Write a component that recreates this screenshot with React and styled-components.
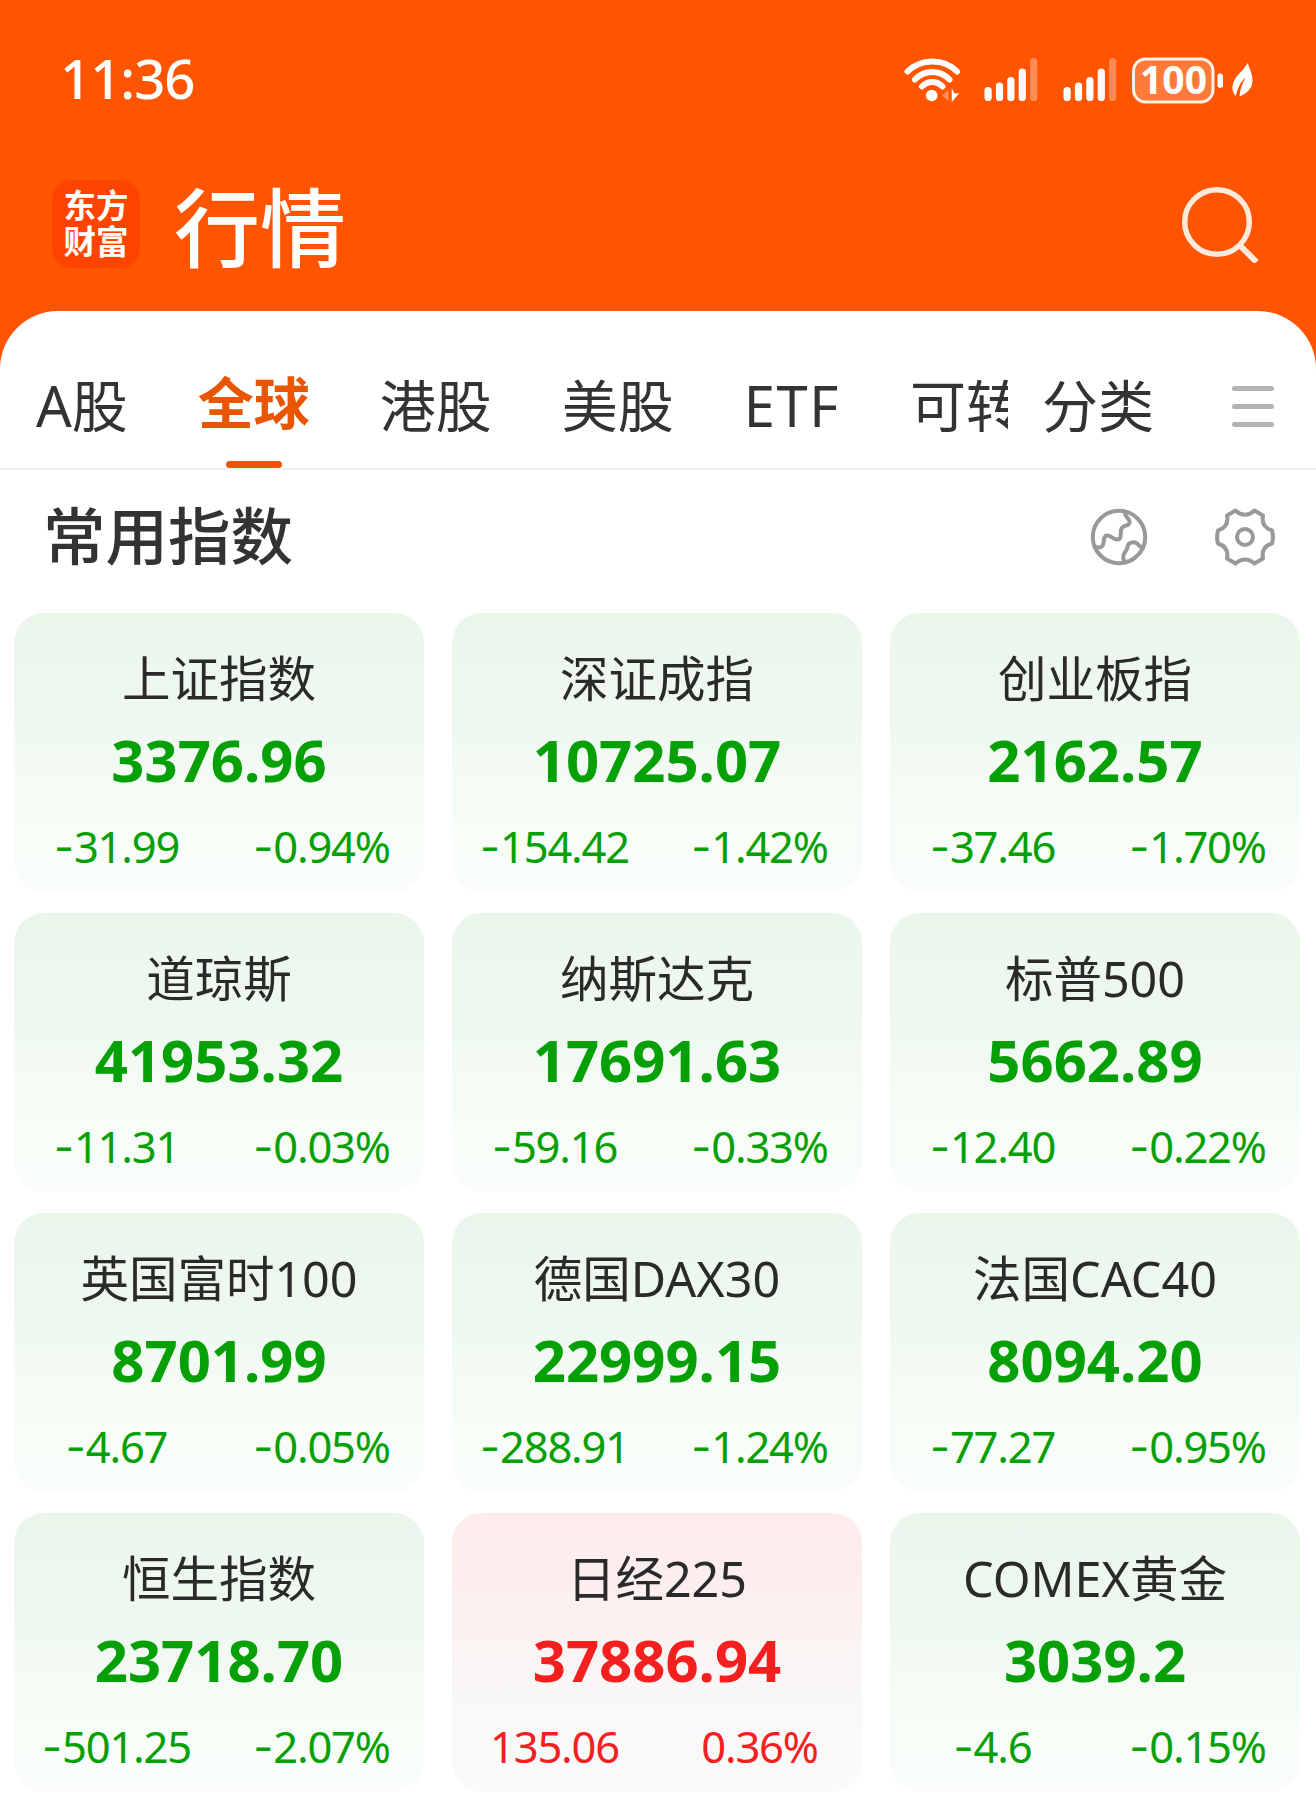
import React from 'react';
import styled, { createGlobalStyle } from 'styled-components';

const Global = createGlobalStyle`
  * { box-sizing: border-box; }
  body { margin: 0; background: #fff; }
`;

const sans = `"Noto Sans", "Noto Sans CJK SC", sans-serif`;

const Screen = styled.div`
  width: 1316px;
  height: 1797px;
  overflow: hidden;
  display: flex;
  flex-direction: column;
  background: #ff5500;
  font-family: ${sans};
`;

const StatusBar = styled.div`
  display: flex;
  align-items: center;
  justify-content: space-between;
  height: 156px;
  padding: 3px 61px 0 60px;
  color: #fff;
`;

const Clock = styled.time`
  font-size: 54.5px;
  font-weight: 500;
  line-height: 74px;
  margin-top: -4px;
  letter-spacing: -1px;
`;

const StatusIcons = styled.svg`
  width: 352px;
  height: 50px;
  display: block;
  overflow: visible;
`;

const BatteryText = styled.text`
  font-family: ${sans};
  font-size: 39px;
  font-weight: 700;
  fill: #fff;
`;

const TitleBar = styled.header`
  display: flex;
  align-items: center;
  height: 155px;
  padding: 0 57px 19px 52px;
`;

const Logo = styled.div`
  width: 88px;
  height: 88px;
  border-radius: 20px;
  background: #ff4400;
  color: #fff;
  display: flex;
  flex-direction: column;
  align-items: center;
  justify-content: center;
  font-size: 32.5px;
  font-weight: 700;
  line-height: 36px;
`;

const PageTitle = styled.h1`
  margin: 0 auto 0 34px;
  color: #fff;
  font-size: 86px;
  font-weight: 500;
  line-height: 100px;
  padding-top: 8px;
`;

const SearchIcon = styled.svg`
  width: 78px;
  height: 78px;
  margin: -1px 0 0 0;
`;

const Sheet = styled.main`
  flex: 1;
  min-height: 0;
  background: #fff;
  border-radius: 58px 58px 0 0;
`;

const TabBar = styled.nav`
  display: flex;
  height: 159px;
  border-bottom: 2px solid #f0f1f2;
  padding: 0 42px 0 36px;
`;

const TabScroller = styled.div`
  display: flex;
  width: 972px;
  overflow: hidden;
  gap: 70px;
`;

const Tab = styled.div`
  flex: none;
  display: flex;
  flex-direction: column;
  align-items: center;
  justify-content: space-between;
  padding-top: ${(p) => (p.$active ? 51 : 54)}px;
  color: ${(p) => (p.$active ? '#ea5504' : '#333')};
  font-size: 56px;
  font-weight: ${(p) => (p.$active ? 700 : 400)};
  line-height: 80px;
  letter-spacing: ${(p) => p.$spacing || 0}px;
  white-space: nowrap;
  margin-left: ${(p) => p.$shift || 0}px;
`;

const Underline = styled.span`
  width: 56px;
  height: 7px;
  border-radius: 4px;
  background: #ea5504;
`;

const MenuButton = styled.div`
  width: 42px;
  margin-left: auto;
  padding-top: 75px;
  display: flex;
  flex-direction: column;
  gap: 13px;
`;

const MenuBar = styled.span`
  height: 5px;
  border-radius: 3px;
  background: #b3b3b3;
`;

const SectionHead = styled.div`
  display: flex;
  align-items: center;
  height: 143px;
  padding: 0 39px 12px 43px;
`;

const SectionTitle = styled.h2`
  margin: 0 auto 0 0;
  color: #333;
  font-size: 62.5px;
  font-weight: 500;
  line-height: 90px;
`;

const LineIcon = styled.svg`
  width: 64px;
  height: 64px;
  margin-left: 62px;
  margin-top: 3px;
  fill: none;
  stroke: #999;
  stroke-width: 4;
  stroke-linejoin: round;
  stroke-linecap: round;
`;

const Grid = styled.section`
  display: grid;
  grid-template-columns: repeat(3, 410px);
  grid-auto-rows: 279px;
  gap: 21px 28px;
  padding-left: 14px;
`;

const Card = styled.article`
  border-radius: 30px;
  padding-top: 30px;
  text-align: center;
  color: ${(p) => (p.$up ? '#f4201f' : '#05a005')};
  background: ${(p) =>
    p.$up
      ? 'linear-gradient(#ffebeb, #fcefef 28%, #f9f7f6 62%, #fafafa)'
      : 'linear-gradient(#ebf6eb, #eef8ef 35%, #f5fcf6 68%, #fafdfa)'};
`;

const Name = styled.div`
  color: #2a2a2a;
  font-size: 48.5px;
  line-height: 70px;
`;

const Price = styled.div`
  margin-top: 7px;
  font-size: 58px;
  font-weight: 700;
  line-height: 80px;
`;

const Changes = styled.div`
  display: grid;
  grid-template-columns: 1fr 1fr;
  margin-top: 16px;
  font-size: 43.5px;
  line-height: 60px;
  letter-spacing: -1.2px;
`;

const Sign = styled.span`
  font-family: Inter, sans-serif;
  letter-spacing: 0;
`;

const INDEXES = [
  ['上证指数', '3376.96', '-31.99', '-0.94%'],
  ['深证成指', '10725.07', '-154.42', '-1.42%'],
  ['创业板指', '2162.57', '-37.46', '-1.70%'],
  ['道琼斯', '41953.32', '-11.31', '-0.03%'],
  ['纳斯达克', '17691.63', '-59.16', '-0.33%'],
  ['标普500', '5662.89', '-12.40', '-0.22%'],
  ['英国富时100', '8701.99', '-4.67', '-0.05%'],
  ['德国DAX30', '22999.15', '-288.91', '-1.24%'],
  ['法国CAC40', '8094.20', '-77.27', '-0.95%'],
  ['恒生指数', '23718.70', '-501.25', '-2.07%'],
  ['日经225', '37886.94', '135.06', '0.36%'],
  ['COMEX黄金', '3039.2', '-4.6', '-0.15%'],
];

const TABS = ['A股', '全球', '港股', '美股', 'ETF', '可转'];

function Change({ value }) {
  if (!value.startsWith('-')) return <span>{value}</span>;
  return (
    <span>
      <Sign>-</Sign>
      {value.slice(1)}
    </span>
  );
}

function Signal({ x }) {
  const heights = [14, 18.5, 24, 32.5, 43];
  return heights.map((h, i) => (
    <rect key={i} x={x + i * 11.4} y={46 - h} width="7.2" height={h} rx="3.6" fill="#fff" opacity={i === 4 ? 0.32 : 1} />
  ));
}

function Status() {
  return (
    <StatusIcons viewBox="0 0 352 50">
      <g fill="none" stroke="#fff" strokeWidth="6" strokeLinecap="round">
        <path d="M4.500 16.500C18 3 41 3 54 16.500" />
        <path d="M12 24.500C21.500 14.500 37 14.500 46.500 24.500" />
        <path d="M19 31.500C25 25.500 33.500 25.500 39.500 31.500" />
      </g>
      <circle cx="28.700" cy="40.500" r="5.800" fill="#fff" />
      <path d="M39 40.500l6.500-5.500v11z" fill="#fff" opacity=".35" />
      <path d="M49.500 36v9l5-6-3 .5z" fill="#fff" stroke="#fff" strokeWidth="1.500" />
      <Signal x={81.500} />
      <Signal x={160.500} />
      <rect x="230.500" y="4" width="79.500" height="43" rx="12" fill="#fff" fillOpacity=".22" stroke="#fff" strokeOpacity=".9" strokeWidth="3" />
      <BatteryText x="270.500" y="39" textAnchor="middle">100</BatteryText>
      <rect x="314.500" y="18.500" width="5.500" height="14.500" rx="2.700" fill="#fff" />
      <path d="M344.500 8C349.500 19 352 29 346 35C343 38.500 340 40 336.500 41.500C337 34 339.500 28 343 22C337.500 27 334 34 333 41C328 37 328.500 29 333 22.500C336.500 17.500 341.500 14 344.500 8Z" fill="#fff" />
    </StatusIcons>
  );
}

export default function App() {
  return (
    <Screen lang="zh-CN">
      <Global />
      <StatusBar>
        <Clock>11:36</Clock>
        <Status />
      </StatusBar>
      <TitleBar>
        <Logo>
          <span>东方</span>
          <span>财富</span>
        </Logo>
        <PageTitle>行情</PageTitle>
        <SearchIcon viewBox="0 0 78 78" fill="none" stroke="#ffe8dc" strokeWidth="5.500">
          <circle cx="36" cy="37" r="32.300" />
          <path d="M59 60.500L75.500 77" strokeWidth="6" />
        </SearchIcon>
      </TitleBar>
      <Sheet>
        <TabBar>
          <TabScroller>
            {TABS.map((t) => (
              <Tab key={t} $active={t === '全球'} $spacing={t === 'ETF' ? 1.6 : 0}>
                {t}
                {t === '全球' && <Underline />}
              </Tab>
            ))}
          </TabScroller>
          <Tab $shift={34}>分类</Tab>
          <MenuButton>
            <MenuBar />
            <MenuBar />
            <MenuBar />
          </MenuButton>
        </TabBar>
        <SectionHead>
          <SectionTitle>常用指数</SectionTitle>
          <LineIcon viewBox="0 0 64 64">
            <circle cx="32" cy="32" r="26.200" />
            <path d="M38 7C37.500 13 43.500 13 42.500 18C41.500 22 35 19 34 25C33.500 30 34.500 35 30 34.500C25 34 22 28.500 18.500 31C15 34 19 42 12 42.500C10 42.700 8.500 42 7.500 41" />
            <path d="M37.500 57C33.500 49 40 47 40.500 42C41 36.500 48.500 36 51.500 40C53 42 54 42.500 56 43" />
          </LineIcon>
          <LineIcon viewBox="0 0 64 64">
            <path d="M22.500 5.500L14 10.500C15.500 18 13 23 5 25.500Q3.200 32 5 38.500C13 41 15.500 46 14 53.500L22.500 58.500C28 53 36 53 41.500 58.500L50 53.500C48.500 46 51 41 59 38.500Q60.800 32 59 25.500C51 23 48.500 18 50 10.500L41.500 5.500C36 11 28 11 22.500 5.500Z" />
            <circle cx="32" cy="32" r="8" />
          </LineIcon>
        </SectionHead>
        <Grid>
          {INDEXES.map(([name, price, diff, pct]) => (
            <Card key={name} $up={!diff.startsWith('-')}>
              <Name>{name}</Name>
              <Price>{price}</Price>
              <Changes>
                <Change value={diff} />
                <Change value={pct} />
              </Changes>
            </Card>
          ))}
        </Grid>
      </Sheet>
    </Screen>
  );
}
